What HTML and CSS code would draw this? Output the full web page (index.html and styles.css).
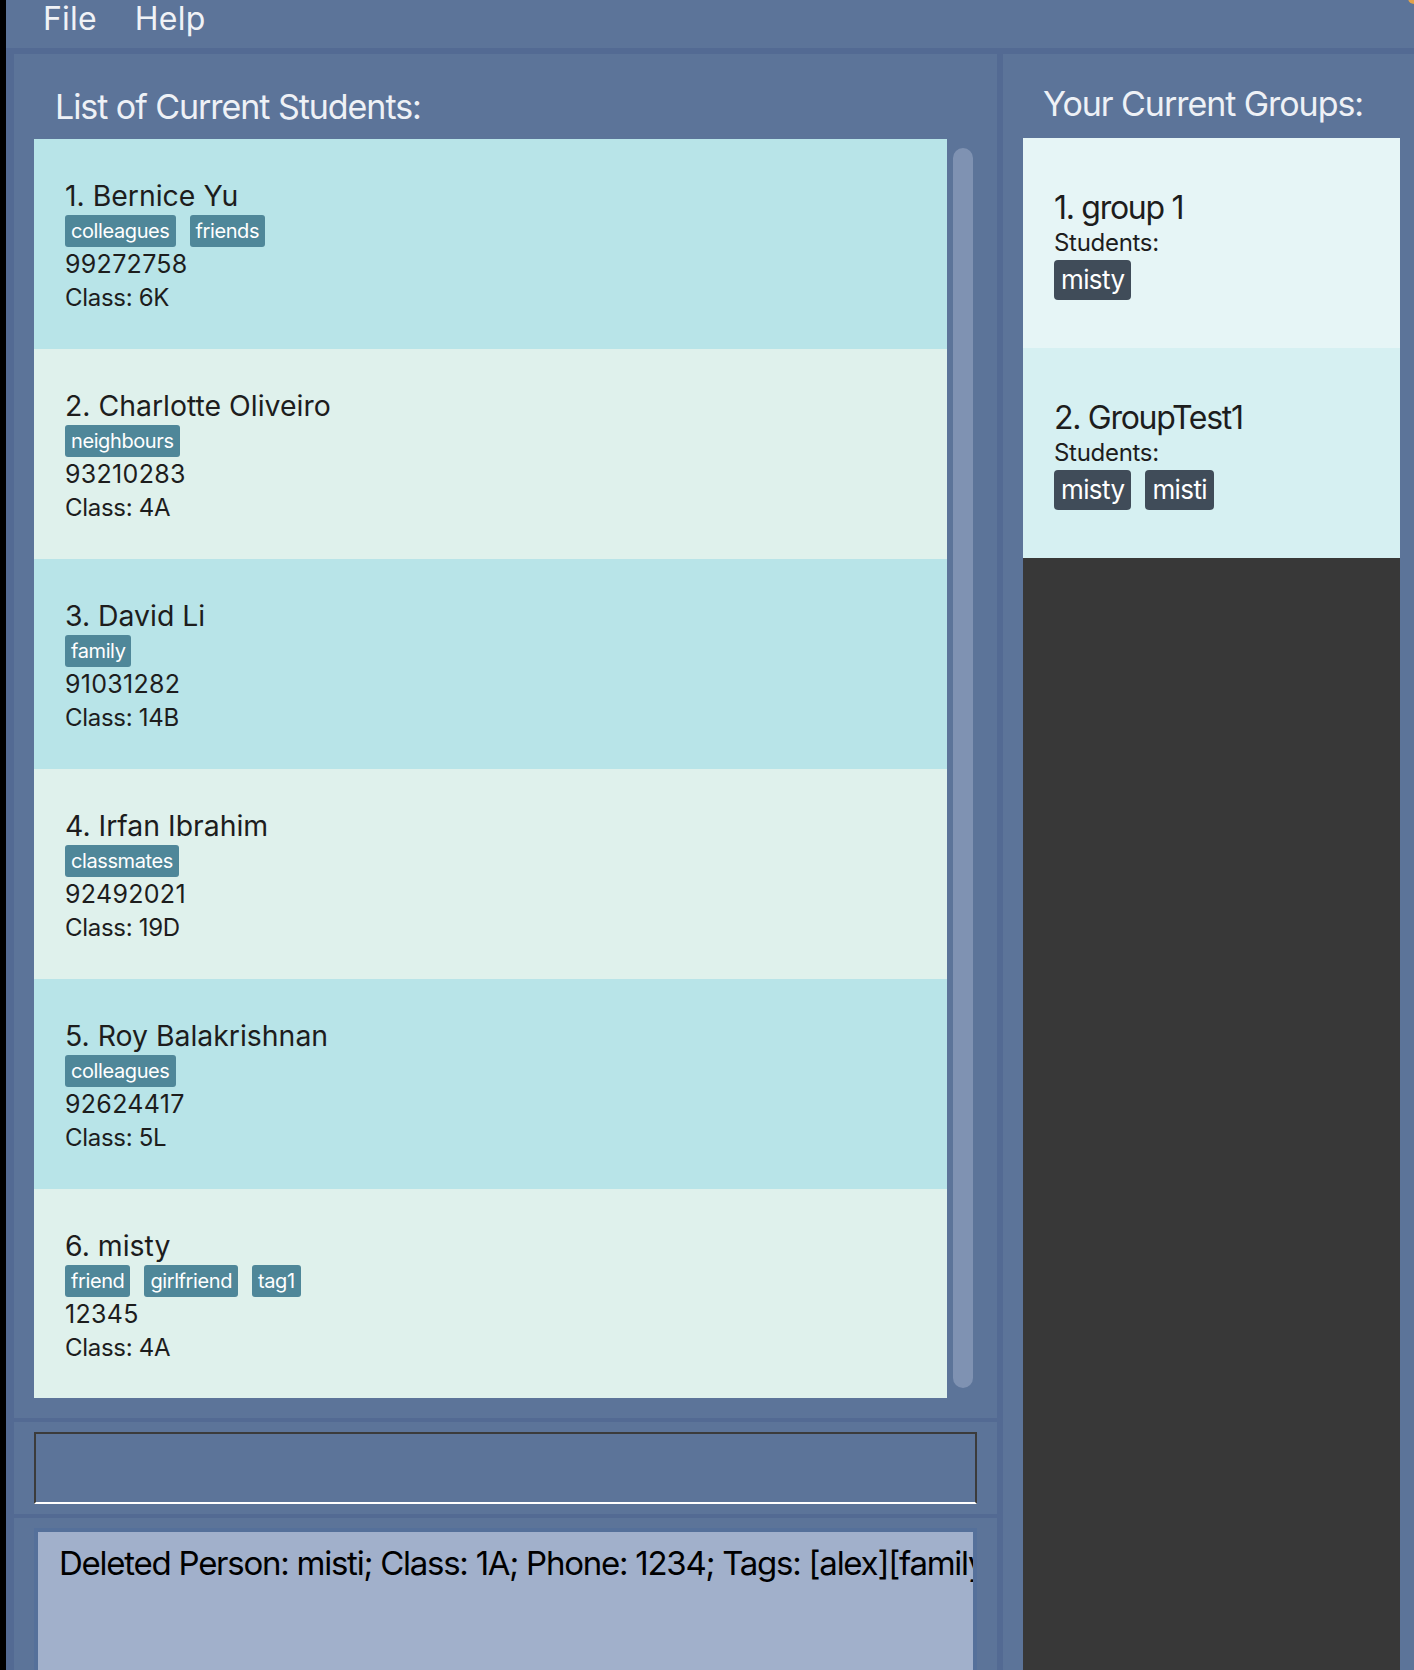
FILE: index.html
```html
<!DOCTYPE html>
<html lang="en">
<head>
<meta charset="utf-8">
<title>Student Manager</title>
<link rel="stylesheet" href="styles.css">
</head>
<body>
<div class="app">
  <div class="menubar">
    <span class="menu">File</span>
    <span class="menu">Help</span>
    <span class="corner-dot"></span>
  </div>
  <div class="main">
    <div class="leftcol">
      <section class="students-panel">
        <h2 class="title title-left">List of Current Students:</h2>
        <div class="list-wrap">
          <div class="student-list">
            <div class="card card-odd">
              <div class="name">1. Bernice Yu</div>
              <div class="tags"><span class="tag">colleagues</span><span class="tag">friends</span></div>
              <div class="line phone">99272758</div>
              <div class="line">Class: 6K</div>
            </div>
            <div class="card card-even">
              <div class="name">2. Charlotte Oliveiro</div>
              <div class="tags"><span class="tag">neighbours</span></div>
              <div class="line phone">93210283</div>
              <div class="line">Class: 4A</div>
            </div>
            <div class="card card-odd">
              <div class="name">3. David Li</div>
              <div class="tags"><span class="tag">family</span></div>
              <div class="line phone">91031282</div>
              <div class="line">Class: 14B</div>
            </div>
            <div class="card card-even">
              <div class="name">4. Irfan Ibrahim</div>
              <div class="tags"><span class="tag">classmates</span></div>
              <div class="line phone">92492021</div>
              <div class="line">Class: 19D</div>
            </div>
            <div class="card card-odd">
              <div class="name">5. Roy Balakrishnan</div>
              <div class="tags"><span class="tag">colleagues</span></div>
              <div class="line phone">92624417</div>
              <div class="line">Class: 5L</div>
            </div>
            <div class="card card-even">
              <div class="name">6. misty</div>
              <div class="tags"><span class="tag">friend</span><span class="tag">girlfriend</span><span class="tag">tag1</span></div>
              <div class="line phone">12345</div>
              <div class="line">Class: 4A</div>
            </div>
          </div>
          <div class="scrollbar"></div>
        </div>
      </section>
      <section class="command-panel">
        <div class="command-box"></div>
      </section>
      <section class="result-panel">
        <div class="result-box">Deleted Person: misti; Class: 1A; Phone: 1234; Tags: [alex][family]</div>
      </section>
    </div>
    <div class="rightcol">
      <h2 class="title title-right">Your Current Groups:</h2>
      <div class="group-list">
        <div class="group group-a">
          <div class="group-name">1. group 1</div>
          <div class="group-label">Students:</div>
          <div class="members"><span class="member">misty</span></div>
        </div>
        <div class="group group-b">
          <div class="group-name">2. GroupTest1</div>
          <div class="group-label">Students:</div>
          <div class="members"><span class="member">misty</span><span class="member">misti</span></div>
        </div>
      </div>
    </div>
  </div>
</div>
</body>
</html>
```
FILE: styles.css
```css
* { box-sizing: border-box; }
html, body {
  margin: 0;
  padding: 0;
  background: #000;
  font-family: Inter, "Noto Sans", "Liberation Sans", sans-serif;
}
.app {
  position: relative;
  margin-left: 6px;
  width: 1408px;
  height: 1670px;
  overflow: hidden;
  background: #5c7499;
}
.menubar {
  height: 54px;
  border-bottom: 6px solid #536a93;
  padding: 2px 0 0 37px;
  display: flex;
  align-items: flex-start;
  gap: 38px;
}
.menu {
  font-size: 32px;
  line-height: 34px;
  color: #f0f2f6;
  letter-spacing: 0.2px;
}
.corner-dot {
  position: absolute;
  right: -6px;
  top: -8px;
  width: 12px;
  height: 12px;
  border-radius: 50%;
  background: #e3a24a;
}
.main {
  display: flex;
  height: 1616px;
}
.leftcol {
  width: 997px;
  flex-shrink: 0;
  border-left: 8px solid #536a93;
  border-right: 6px solid #536a93;
  display: flex;
  flex-direction: column;
  overflow: hidden;
}
.title {
  margin: 0;
  font-weight: 400;
  font-size: 34px;
  line-height: 42px;
  letter-spacing: -1.05px;
  color: #eef1f6;
}
.title-left { padding: 32px 0 0 41px; height: 85px; }
.title-right { padding: 29px 0 0 40px; height: 84px; flex-shrink: 0; }
.students-panel {
  flex-shrink: 0;
  height: 1368px;
  border-bottom: 4px solid #536a93;
}
.list-wrap {
  display: flex;
  padding-left: 20px;
  gap: 6px;
}
.student-list {
  width: 913px;
  height: 1259px;
  overflow: hidden;
}
.card {
  height: 210px;
  padding: 40px 0 0 31px;
  color: #1d1d1d;
}
.card-odd { background: #b8e4e8; }
.card-even { background: #dff1ec; }
.name {
  font-size: 28.4px;
  line-height: 34px;
}
.tags {
  display: flex;
  gap: 14px;
  margin-top: 2px;
  height: 32px;
}
.tag {
  background: #4f8799;
  color: #fff;
  font-size: 20px;
  line-height: 24px;
  letter-spacing: -0.4px;
  padding: 4px 6px;
  border-radius: 3px;
}
.line {
  font-size: 24px;
  line-height: 34px;
  letter-spacing: -0.3px;
}
.phone {
  font-size: 25px;
  letter-spacing: 0.3px;
}
.scrollbar {
  margin-top: 9px;
  width: 20px;
  height: 1240px;
  border-radius: 10px;
  background: #7f92b2;
}
.command-panel {
  flex-shrink: 0;
  height: 96px;
  border-bottom: 4px solid #536a93;
  padding: 10px 0 0 20px;
}
.command-box {
  width: 943px;
  height: 72px;
  border: 2px solid #3b3b3b;
  border-bottom-color: #ffffff;
}
.result-panel {
  flex: 1;
  min-height: 0;
  padding: 10px 0 0 20px;
}
.result-box {
  width: 943px;
  height: 200px;
  border: 4px solid #55709a;
  background: #a1b0cb;
  padding: 11px 0 0 21px;
  font-size: 33px;
  line-height: 40px;
  letter-spacing: -1.25px;
  color: #000;
  white-space: nowrap;
  overflow: hidden;
}
.rightcol {
  flex: 1;
  display: flex;
  flex-direction: column;
}
.group-list {
  flex: 1;
  margin: 0 14px 0 20px;
  background: #383838;
}
.group {
  height: 210px;
  padding: 50px 0 0 31px;
  color: #1d1d1d;
}
.group-a { background: #e6f5f6; }
.group-b { background: #d6f0f2; }
.group-name {
  font-size: 32px;
  line-height: 40px;
  letter-spacing: -1.3px;
}
.group-label {
  font-size: 24px;
  line-height: 30px;
  letter-spacing: -0.3px;
}
.members {
  display: flex;
  gap: 14px;
  margin-top: 2px;
}
.member {
  background: #404c59;
  color: #fff;
  font-size: 26px;
  line-height: 32px;
  letter-spacing: -0.6px;
  padding: 4px 7px;
  border-radius: 4px;
}
```
